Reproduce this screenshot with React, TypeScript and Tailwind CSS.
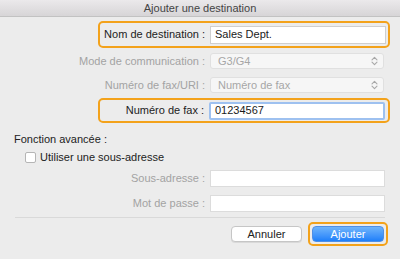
import { ReactNode } from "react"

const font = { fontFamily: '"Liberation Sans", Arial, sans-serif' }

function UpDown() {
  return (
    <svg width="7" height="10" viewBox="0 0 7 10" fill="none" stroke="#a8a8a8" strokeWidth="1.1" strokeLinecap="round" strokeLinejoin="round">
      <path d="M1 3.8 L3.5 1.3 L6 3.8" />
      <path d="M1 6.2 L3.5 8.7 L6 6.2" />
    </svg>
  )
}

// label column: right edge at x=205, inputs start at x=210
function Label({ children, muted, w }: { children: ReactNode; muted?: boolean; w: string }) {
  return (
    <div className={`${w} shrink-0 whitespace-nowrap text-right pr-[5px] text-[11px] ${muted ? "text-[#a3a3a3]" : "text-[#222]"}`}>
      {children}
    </div>
  )
}

function Select({ value }: { value: string }) {
  return (
    <div className="w-[174px] h-[16px] bg-[#f6f6f6] border border-[#e0e0e0] rounded-[3px] flex items-center justify-between pl-[7px] pr-[5px] text-[11px] text-[#a6a6a6]">
      <span>{value}</span>
      <UpDown />
    </div>
  )
}

function TextField({ value, focus }: { value?: string; focus?: boolean }) {
  return (
    <div
      className={`w-[176px] h-[18px] bg-white flex items-center pl-[4px] text-[11px] text-[#1a1a1a] ${
        focus ? "border-2 border-[#9ec1f0] rounded-[2px]" : "border border-[#cfcfcf]"
      }`}
    >
      {value}
    </div>
  )
}

export default function App() {
  return (
    <div className="w-[400px] h-[259px] bg-[#ececec] flex flex-col" style={font}>
      <div className="h-[17px] shrink-0 bg-gradient-to-b from-[#ebe9eb] to-[#d7d5d7] border-b border-[#c2c2c2] flex items-center justify-center text-[11px] text-[#444]">
        Ajouter une destination
      </div>

      <div className="mt-[4px] ml-[98px] w-[292px] h-[27px] border-2 border-[#f3a21b] rounded-[5px] flex items-center">
        <Label w="w-[110px]">Nom de destination :</Label>
        <TextField value="Sales Dept." />
      </div>

      <div className="mt-[5px] flex items-center h-[16px]">
        <Label muted w="w-[210px]">Mode de communication :</Label>
        <Select value="G3/G4" />
      </div>

      <div className="mt-[8px] flex items-center h-[16px]">
        <Label muted w="w-[210px]">Numéro de fax/URI :</Label>
        <Select value="Numéro de fax" />
      </div>

      <div className="mt-[5px] ml-[98px] w-[292px] h-[25px] border-2 border-[#f3a21b] rounded-[5px] flex items-center">
        <Label w="w-[109px]">Numéro de fax :</Label>
        <TextField value="01234567" focus />
      </div>

      <div className="mt-[9px] ml-[14px] text-[11px] text-[#222] leading-[14px]">Fonction avancée :</div>

      <div className="mt-[4px] ml-[25px] flex items-center gap-[4px] text-[11px] text-[#222] leading-[14px]">
        <div className="w-[11px] h-[11px] bg-white border border-[#b5b5b5] rounded-[2px]" />
        <span>Utiliser une sous-adresse</span>
      </div>

      <div className="mt-[6px] flex items-center">
        <Label muted w="w-[210px]">Sous-adresse :</Label>
        <div className="w-[175px] h-[17px] bg-white border border-[#dcdcdc]" />
      </div>

      <div className="mt-[8px] flex items-center">
        <Label muted w="w-[210px]">Mot de passe :</Label>
        <div className="w-[175px] h-[17px] bg-white border border-[#dcdcdc]" />
      </div>

      <div className="mt-[5px] mx-[15px] h-px bg-[#d9d9d9]" />

      <div className="mt-[4px] flex justify-end items-center gap-[6px] pr-[12px]">
        <button className="w-[71px] h-[16px] bg-white border border-[#c6c6c6] rounded-[4px] shadow-[0_1px_0_rgba(0,0,0,0.08)] text-[11px] text-[#222] leading-none">
          Annuler
        </button>
        <div className="w-[80px] h-[24px] border-2 border-[#f3a21b] rounded-[5px] flex items-center justify-center">
          <button className="w-[72px] h-[16px] rounded-[4px] bg-gradient-to-b from-[#6eb4fb] to-[#1d7ffa] border border-[#4f8fe6] text-[11px] text-white leading-none">
            Ajouter
          </button>
        </div>
      </div>
    </div>
  )
}
